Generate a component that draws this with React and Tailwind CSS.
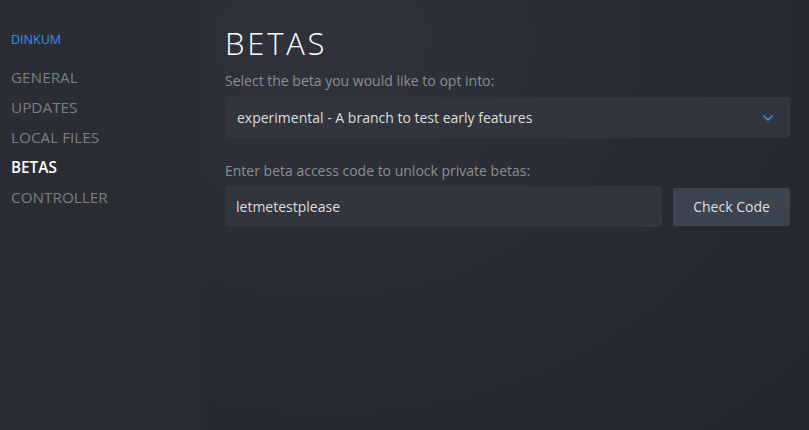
import { ChevronDown } from 'lucide-react';

const navItems = ['GENERAL', 'UPDATES', 'LOCAL FILES', 'BETAS', 'CONTROLLER'];

export default function App() {
    return (
        <div
            className="flex w-[809px] h-[430px] overflow-hidden text-[#dcdedf]"
            style={{ fontFamily: '"Open Sans", "Noto Sans", sans-serif' }}
        >
            {/* Sidebar */}
            <div className="w-[201px] shrink-0 bg-[#2a2d34] pt-[31px] pl-[11px]">
                <div className="text-[12.5px] leading-[18px] text-[#3d8fe0] mb-[13px]">DINKUM</div>
                <div className="flex flex-col">
                    {navItems.map((item) => (
                        <div
                            key={item}
                            className={
                                item === 'BETAS'
                                    ? 'h-[30px] flex items-center text-[15.3px] font-semibold text-white'
                                    : 'h-[30px] flex items-center text-[15.3px] text-[#7b7e84]'
                            }
                        >
                            {item}
                        </div>
                    ))}
                </div>
            </div>

            {/* Main panel */}
            <div className="flex-1 bg-[radial-gradient(ellipse_at_20%_10%,#30333c_0%,#292c33_45%,#23262c_100%)] pl-[24px] pr-[19px] pt-[23px]">
                <h1 className="text-[31px] leading-[40px] font-[350] tracking-[0.09em] text-white">BETAS</h1>

                <div className="mt-[9px] text-[14px] leading-[18px] text-[#8b8e94]">
                    Select the beta you would like to opt into:
                </div>
                <div className="mt-[7px] h-[41px] rounded-[3px] bg-[#32353d] flex items-center justify-between pl-[12px] pr-[14px]">
                    <span className="text-[14px]">experimental - A branch to test early features</span>
                    <ChevronDown size={16} strokeWidth={2.5} className="text-[#1a9fff]" />
                </div>

                <div className="mt-[24px] text-[14px] leading-[18px] text-[#8b8e94]">
                    Enter beta access code to unlock private betas:
                </div>
                <div className="mt-[6px] flex items-center gap-[11px]">
                    <div className="flex-1 h-[41px] rounded-[3px] bg-[#32353d] flex items-center pl-[11px] text-[14px]">
                        letmetestplease
                    </div>
                    <button className="w-[117px] h-[38px] rounded-[2px] bg-[#3d4450] text-[14px] text-[#dcdedf]">
                        Check Code
                    </button>
                </div>
            </div>
        </div>
    );
}
